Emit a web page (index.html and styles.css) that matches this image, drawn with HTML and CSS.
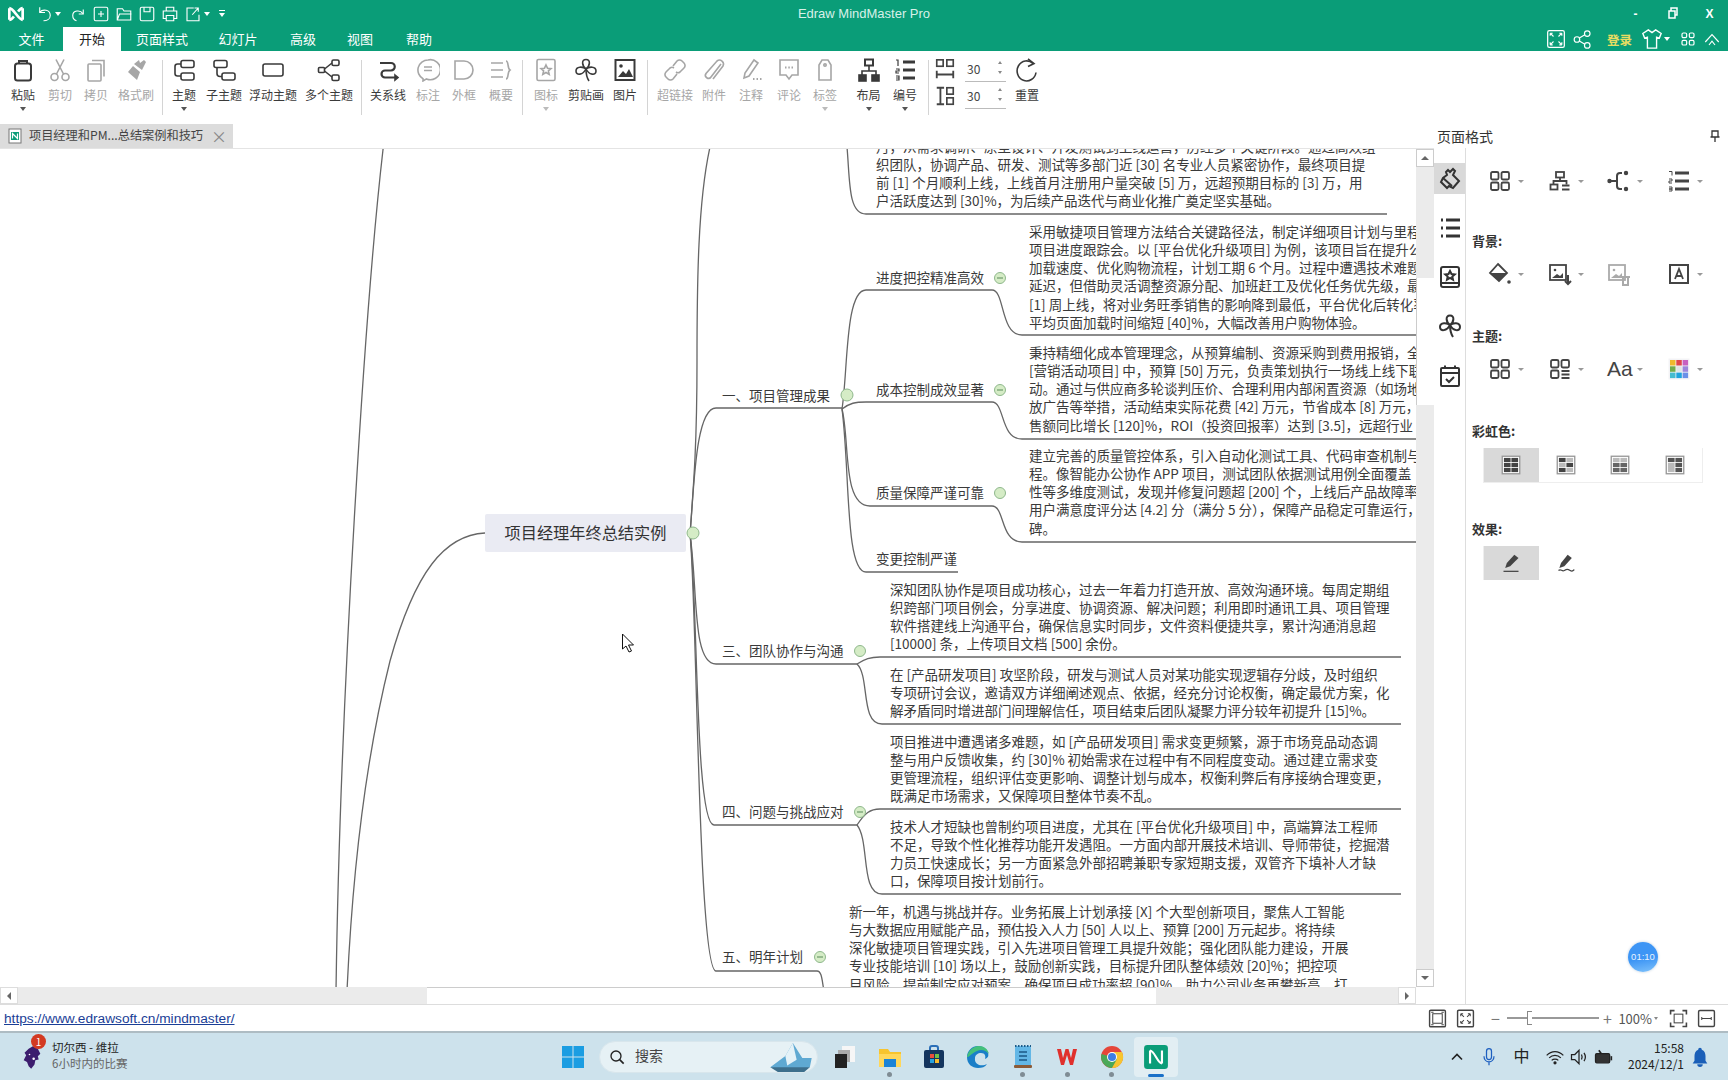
FILE: index.html
```html
<!DOCTYPE html>
<html lang="zh-CN">
<head>
<meta charset="utf-8">
<title>Edraw MindMaster Pro</title>
<link rel="stylesheet" href="styles.css">
</head>
<body>
<svg class="sprite" aria-hidden="true">
  <symbol id="clip" viewBox="0 0 24 24"><rect x="4" y="5.500" width="16" height="17" rx="2.500" stroke-width="2"/><path d="M8 5.500V3h8v2.500" stroke-width="2"/></symbol>
  <symbol id="cut" viewBox="0 0 24 24"><circle cx="6.500" cy="19" r="3.500"/><circle cx="17.500" cy="19" r="3.500"/><path d="M8.500 16 16 1.500M15.500 16 8 1.500"/></symbol>
  <symbol id="copy" viewBox="0 0 24 24"><rect x="4" y="6" width="13" height="17" rx="1"/><path d="M8 2.500h12v16"/></symbol>
  <symbol id="brush" viewBox="0 0 24 24"><path d="M15 2l1 3 4-3 2 2-4 8-8-6zM9 8l7 6-3 8-9-8z" fill="currentColor" stroke="none"/></symbol>
  <symbol id="topic" viewBox="0 0 24 24"><rect x="9" y="2.500" width="13" height="7" rx="2"/><rect x="9" y="15" width="13" height="7" rx="2"/><path d="M9 6H5.500a2.500 2.500 0 0 0-2.500 2.500v7a2.500 2.500 0 0 0 2.500 2.500H9"/></symbol>
  <symbol id="sub" viewBox="0 0 24 24"><rect x="2" y="2.500" width="13" height="7" rx="2"/><rect x="10" y="15" width="13" height="7" rx="2"/><path d="M5 9.500v6a3 3 0 0 0 3 3h2"/></symbol>
  <symbol id="float" viewBox="0 0 24 24"><rect x="2" y="6" width="20" height="12" rx="2"/></symbol>
  <symbol id="multi" viewBox="0 0 24 24"><rect x="1.500" y="9.500" width="6" height="5" rx="1"/><rect x="15" y="2" width="7" height="5.500" rx="1.500"/><rect x="15" y="17" width="7" height="5.500" rx="1.500"/><path d="M7.500 11 15 5M7.500 13 15 19"/></symbol>
  <symbol id="rel" viewBox="0 0 24 24"><path d="M4 5h11a3.500 3.500 0 0 1 0 7.500H9a3.500 3.500 0 0 0 0 7h10" stroke-width="2.200"/><path d="M19 17l3 2.500-3 2.500z" fill="currentColor"/></symbol>
  <symbol id="note" viewBox="0 0 24 24"><path d="M12 2a10 10 0 0 0-5 18.700V23l3.500-2.100A10 10 0 1 0 12 2z"/><path d="M8 9h8M8 12.500h8"/></symbol>
  <symbol id="bound" viewBox="0 0 24 24"><path d="M3 3h9a9 9 0 0 1 0 18H3z"/></symbol>
  <symbol id="sum" viewBox="0 0 24 24"><path d="M2 5h12M2 12h12M2 19h12M17 3c3 0 1 7 4 9-3 2-1 9-4 9"/></symbol>
  <symbol id="badge" viewBox="0 0 24 24"><rect x="3" y="1.500" width="18" height="21" rx="1.500"/><path d="M12 7l1.500 3.200 3.500.4-2.600 2.300.8 3.400-3.200-1.800-3.200 1.800.8-3.400L7 10.600l3.500-.4z"/></symbol>
  <symbol id="clover" viewBox="0 0 24 24"><path d="M12 11C8 8 7 1.500 12 1.500s4 6.500 0 9.500zM12 11c-3-2.500-10-3-10 2s7 4 10-2zM12 11c3-2.500 10-3 10 2s-7 4-10-2z"/><path d="M12 11c0 5 1 9 3 12" /></symbol>
  <symbol id="pic" viewBox="0 0 24 24"><rect x="2.500" y="2" width="19" height="20" stroke-width="2"/><circle cx="8" cy="8" r="1.800" fill="currentColor" stroke="none"/><path d="M5 19l5-6 3 3 3-5 4 8z" fill="currentColor" stroke="none"/></symbol>
  <symbol id="link" viewBox="0 0 24 24"><path d="M10 8l4-5a3.500 3.500 0 0 1 5 0l2 2a3.500 3.500 0 0 1 0 5l-4 4a3.500 3.500 0 0 1-4 0M14 16l-4 5a3.500 3.500 0 0 1-5 0l-2-2a3.500 3.500 0 0 1 0-5l4-4a3.500 3.500 0 0 1 4 0"/></symbol>
  <symbol id="paper" viewBox="0 0 24 24"><path d="M19 6 9 19a3 3 0 0 1-5-3.500L15 3a4 4 0 0 1 6 5L11 21"/></symbol>
  <symbol id="pen" viewBox="0 0 24 24"><path d="M15 2l4 3-9 13-5 2 1-5z"/><path d="M14 21h1.500M17.500 21H19M21 21h1.500" stroke-width="2"/></symbol>
  <symbol id="comment" viewBox="0 0 24 24"><path d="M3 2h18v15h-6l-3 4-3-4H3z"/><path d="M8 9.500h1.500M11.300 9.500h1.500M14.500 9.500H16" stroke-width="2"/></symbol>
  <symbol id="tag" viewBox="0 0 24 24"><path d="M9 2h6l3 5v15H6V7z"/><circle cx="12" cy="7" r="1.200"/></symbol>
  <symbol id="org" viewBox="0 0 24 24"><rect x="8" y="1.500" width="8" height="6" stroke-width="2"/><path d="M12 7.500V13M5 17v-4h14v4"/><rect x="2" y="17" width="7" height="6" fill="currentColor"/><rect x="15" y="17" width="7" height="6" fill="currentColor"/></symbol>
  <symbol id="nums" viewBox="0 0 24 24"><path d="M3 2h2v6M3 11h3v2H3v2h3M3 18h3v2H3M3 20h3v2H3" stroke-width="1.200"/><path d="M10 4h12M10 12h12M10 20h12" stroke-width="3"/></symbol>
  <symbol id="gaph" viewBox="0 0 24 24"><rect x="3" y="2" width="7" height="7"/><rect x="14" y="2" width="7" height="7"/><path d="M3 14v8M21 14v8M3 18h18" stroke-width="2"/></symbol>
  <symbol id="gapv" viewBox="0 0 24 24"><rect x="14" y="3" width="7" height="7"/><rect x="14" y="14" width="7" height="7"/><path d="M3 3h8M3 21h8M7 3v18" stroke-width="2"/></symbol>
  <symbol id="reset" viewBox="0 0 24 24"><path d="M18 5.500a9.500 10 0 1 0 3 9"/><path d="M13 1l6 4.500-6 3"/></symbol>
  <symbol id="nine" viewBox="0 0 24 24"><rect x="3" y="3" width="7.500" height="7.500" rx="1.500"/><rect x="13.500" y="3" width="7.500" height="7.500" rx="1.500"/><rect x="3" y="13.500" width="7.500" height="7.500" rx="1.500"/><rect x="13.500" y="13.500" width="7.500" height="7.500" rx="1.500"/></symbol>
  <symbol id="nine2" viewBox="0 0 24 24"><rect x="3" y="3" width="7.500" height="7.500" rx="1.500"/><rect x="13.500" y="3" width="7.500" height="7.500" rx="1.500"/><rect x="3" y="13.500" width="7.500" height="7.500" rx="1.500"/><path d="M13.500 14h8M13.500 17.500h8M13.500 21h8"/></symbol>
  <symbol id="pfill" viewBox="0 0 24 24"><path d="M10 3l2 2 3-3 2 2-2 4 6 6-6 7-4-2-2 2-6-6 2-4 4-3-1-3z" stroke-width="2"/><path d="M5 11l9 8" stroke-width="2"/></symbol>
  <symbol id="porg" viewBox="0 0 24 24"><rect x="8" y="3" width="8" height="5.500"/><path d="M12 8.500V12M5.500 15.500V12h13v3.500"/><rect x="2.500" y="15.500" width="7" height="5"/><path d="M14 16.500h7.500M14 20.500h7.500"/></symbol>
  <symbol id="pconn" viewBox="0 0 24 24"><circle cx="2.500" cy="12" r="1.300" fill="currentColor"/><path d="M4 12h5M15 4h-2a3 3 0 0 0-3 3v10a3 3 0 0 0 3 3h2" stroke-width="2"/><circle cx="19" cy="4" r="1.300" fill="currentColor"/><circle cx="19" cy="20" r="1.300" fill="currentColor"/></symbol>
  <symbol id="plist" viewBox="0 0 24 24"><path d="M2 2.500h3v4M2 10h3v2H2v2h3M2 18h3v2H2M2 20h3v2H2" stroke-width="1"/><path d="M8 4h14M8 12h14M8 20h14" stroke-width="3"/></symbol>
  <symbol id="ptab" viewBox="0 0 24 24"><path d="M3 4h2M3 12h2M3 20h2M8 4h14M8 12h14M8 20h14" stroke-width="3"/></symbol>
  <symbol id="pfill2" viewBox="0 0 24 24"><path d="M10 2l9 9-8 8-9-8z"/><path d="M2 11h17l-8 8z" fill="currentColor" stroke="none"/><circle cx="21" cy="20" r="1.800" fill="currentColor" stroke="none"/></symbol>
  <symbol id="pimg" viewBox="0 0 24 24"><rect x="2" y="3" width="16" height="15"/><circle cx="7" cy="8" r="1.300" fill="currentColor" stroke="none"/><path d="M4 16l5-4 3 2 3-3v5z" fill="currentColor" stroke="none"/><path d="M20 13v9M17 19l3 3 3-3" stroke-width="2"/></symbol>
  <symbol id="pdel" viewBox="0 0 24 24"><rect x="2" y="3" width="16" height="15"/><circle cx="7" cy="8" r="1.300" fill="currentColor" stroke="none"/><path d="M4 16l5-4 3 2 3-3v5z" fill="currentColor" stroke="none"/><path d="M14 15h9M16 15v8h5v-8" stroke-width="2"/></symbol>
  <symbol id="pa" viewBox="0 0 24 24"><rect x="3" y="3" width="18" height="18" stroke-width="2"/><path d="M8 17l4-10 4 10M9.500 14h5"/></symbol>
  <symbol id="pbook" viewBox="0 0 24 24"><rect x="3" y="2" width="18" height="20" rx="2" stroke-width="2"/><path d="M3 18h18" stroke-width="2"/><path d="M12 6l1.500 3 3.200.4-2.400 2.100.7 3.200-3-1.700-3 1.700.7-3.200-2.400-2.100 3.200-.4z"/></symbol>
  <symbol id="pcal" viewBox="0 0 24 24"><rect x="3" y="4" width="18" height="18" rx="1" stroke-width="2"/><path d="M3 9h18M7 1.500V5M17 1.500V5" stroke-width="2"/><path d="M8 15l3 3 5-5" stroke-width="2"/></symbol>
  <symbol id="g1" viewBox="0 0 24 24"><rect x="1.500" y="1.500" width="21" height="21" fill="#fff" stroke="#999"/><g fill="#444" stroke="none"><rect x="3.500" y="3.500" width="8" height="5"/><rect x="12.500" y="3.500" width="8" height="5"/><rect x="3.500" y="9.500" width="8" height="5"/><rect x="12.500" y="9.500" width="8" height="5"/><rect x="3.500" y="15.500" width="8" height="5"/><rect x="12.500" y="15.500" width="8" height="5"/></g></symbol>
  <symbol id="g2" viewBox="0 0 24 24"><rect x="1.500" y="1.500" width="21" height="21" fill="#fff" stroke="#999"/><g stroke="none"><rect x="3.500" y="3.500" width="8" height="5" fill="#444"/><rect x="12.500" y="3.500" width="8" height="5" fill="#bbb"/><rect x="3.500" y="9.500" width="8" height="5" fill="#bbb"/><rect x="12.500" y="9.500" width="8" height="5" fill="#444"/><rect x="3.500" y="15.500" width="8" height="5" fill="#444"/><rect x="12.500" y="15.500" width="8" height="5" fill="#bbb"/></g></symbol>
  <symbol id="g3" viewBox="0 0 24 24"><rect x="1.500" y="1.500" width="21" height="21" fill="#fff" stroke="#999"/><g stroke="none"><rect x="3.500" y="3.500" width="8" height="5" fill="#bbb"/><rect x="12.500" y="3.500" width="8" height="5" fill="#bbb"/><rect x="3.500" y="9.500" width="8" height="5" fill="#666"/><rect x="12.500" y="9.500" width="8" height="5" fill="#666"/><rect x="3.500" y="15.500" width="8" height="5" fill="#666"/><rect x="12.500" y="15.500" width="8" height="5" fill="#666"/></g></symbol>
  <symbol id="g4" viewBox="0 0 24 24"><rect x="1.500" y="1.500" width="21" height="21" fill="#fff" stroke="#999"/><g stroke="none"><rect x="3.500" y="3.500" width="8" height="5" fill="#555"/><rect x="12.500" y="3.500" width="8" height="5" fill="#555"/><rect x="3.500" y="9.500" width="8" height="11" fill="#bbb"/><rect x="12.500" y="9.500" width="8" height="5" fill="#555"/><rect x="12.500" y="15.500" width="8" height="5" fill="#555"/></g></symbol>
  <symbol id="fx1" viewBox="0 0 24 24"><path d="M16 2l5 4-10 10-6 2 2-6z" fill="currentColor" stroke="none"/><path d="M3 22h18" stroke-width="1.500"/></symbol>
  <symbol id="fx2" viewBox="0 0 24 24"><path d="M14 2l5 4-9 10-6 2 2-6z" fill="currentColor" stroke="none"/><path d="M3 21c3-3 4 2 7 0s4-2 7 0 3 0 5-1" stroke-width="1.500"/></symbol>
  <symbol id="logo" viewBox="0 0 24 24"><path d="M4 5v14M20 5v14M4 5c5 0 11 14 16 14M20 5c-2 0-4 2-5.500 4M4 19c2 0 4-2 5.500-4" fill="none"/></symbol>
</svg>

<header class="titlebar">
  <div class="qa">
    <svg class="i logo"><use href="#logo"/></svg>
    <svg class="i q ml10" viewBox="0 0 24 24"><path d="M5 3v7h7"/><path d="M5 9.500C9 5 19 6 19 14c0 5-5 7-9 7"/></svg>
    <span class="caret-w"></span>
    <svg class="i q ml8" viewBox="0 0 24 24"><path d="M19 6v6h-6"/><path d="M18.500 11.500C15 6 5 7 5 14c0 4 2 6 5 7"/></svg>
    <svg class="i q ml5" viewBox="0 0 24 24"><rect x="3" y="3" width="18" height="18" rx="2"/><path d="M12 8v8M8 12h8"/></svg>
    <svg class="i q ml5" viewBox="0 0 24 24"><path d="M3 20V5h7l2 3h9v12zM3 20l3-8h16"/></svg>
    <svg class="i q ml5" viewBox="0 0 24 24"><rect x="3" y="3" width="18" height="18" rx="2"/><path d="M8 3v6h8V3"/></svg>
    <svg class="i q ml5" viewBox="0 0 24 24"><path d="M7 8V3h10v5M7 18H3V8h18v10h-4M7 14h10v7H7z"/></svg>
    <svg class="i q ml5" viewBox="0 0 24 24"><path d="M20 13v8H4V4h9M11 13l8-9M14 4h5v5"/></svg>
    <span class="caret-w ml2"></span>
    <span class="custom"></span>
  </div>
  <div class="apptitle">Edraw MindMaster Pro</div>
  <div class="winctl">
    <span class="wbtn">-</span>
    <svg class="wbtn wsvg" viewBox="0 0 37 14"><path d="M15 5h6v7h-6zM17 5V2h6v7h-2" fill="none" stroke="#fff" stroke-width="1.500"/></svg>
    <span class="wbtn wx">X</span>
  </div>
</header>

<nav class="tabs">
  <a class="tab w63">文件</a>
  <a class="tab tab-on w58">开始</a>
  <a class="tab w82">页面样式</a>
  <a class="tab w70">幻灯片</a>
  <a class="tab w60">高级</a>
  <a class="tab w54">视图</a>
  <a class="tab w64">帮助</a>
  <div class="tabright">
    <svg class="i full" viewBox="0 0 24 24"><rect x="2" y="2" width="20" height="20" rx="2"/><path d="M5 5l4 4M5 5h3M5 5v3M19 5l-4 4M19 5h-3M19 5v3M5 19l4-4M5 19h3M5 19v-3M19 19l-4-4M19 19h-3M19 19v-3" stroke-width="1.300"/></svg>
    <svg class="i share" viewBox="0 0 24 24"><circle cx="5" cy="12" r="3.500"/><circle cx="18" cy="4.500" r="3.500"/><circle cx="18" cy="19.500" r="3.500"/><path d="M8 10l7-4M8 14l7 4"/></svg>
    <span class="login">登录</span>
    <svg class="i shirt" viewBox="0 0 24 24"><path d="M8 2l4 3 4-3 6 4-2 5-3-1v12H7V10l-3 1-2-5z"/></svg>
    <span class="caret-w ml1"></span>
    <svg class="i apps" viewBox="0 0 24 24"><rect x="3" y="3" width="7" height="7" rx="2"/><rect x="14" y="3" width="7" height="7" rx="2"/><rect x="3" y="14" width="7" height="7" rx="2"/><rect x="14" y="14" width="7" height="7" rx="2"/></svg>
    <svg class="i coll" viewBox="0 0 24 24"><path d="M3 16l9-10 9 10M8 20l4-5 4 5"/></svg>
  </div>
</nav>

<section class="ribbon">
  <div class="b w38"><svg class="i"><use href="#clip"/></svg><span>粘贴</span><i class="caret"></i></div>
  <div class="b w36 off"><svg class="i"><use href="#cut"/></svg><span>剪切</span></div>
  <div class="b w36 off"><svg class="i"><use href="#copy"/></svg><span>拷贝</span></div>
  <div class="b w44 off"><svg class="i"><use href="#brush"/></svg><span>格式刷</span></div>
  <div class="sep ml4"></div>
  <div class="b w36"><svg class="i"><use href="#topic"/></svg><span>主题</span><i class="caret"></i></div>
  <div class="b w44"><svg class="i"><use href="#sub"/></svg><span>子主题</span></div>
  <div class="b w54"><svg class="i"><use href="#float"/></svg><span>浮动主题</span></div>
  <div class="b w58"><svg class="i"><use href="#multi"/></svg><span>多个主题</span></div>
  <div class="sep"></div>
  <div class="b w46"><svg class="i"><use href="#rel"/></svg><span>关系线</span></div>
  <div class="b w34 off"><svg class="i"><use href="#note"/></svg><span>标注</span></div>
  <div class="b w38 off"><svg class="i"><use href="#bound"/></svg><span>外框</span></div>
  <div class="b w36 off"><svg class="i"><use href="#sum"/></svg><span>概要</span></div>
  <div class="sep"></div>
  <div class="b w40 off"><svg class="i"><use href="#badge"/></svg><span>图标</span><i class="caret"></i></div>
  <div class="b w40"><svg class="i"><use href="#clover"/></svg><span>剪贴画</span></div>
  <div class="b w38"><svg class="i"><use href="#pic"/></svg><span>图片</span></div>
  <div class="sep"></div>
  <div class="b w48 off"><svg class="i"><use href="#link"/></svg><span>超链接</span></div>
  <div class="b w30 off"><svg class="i"><use href="#paper"/></svg><span>附件</span></div>
  <div class="b w44 off"><svg class="i"><use href="#pen"/></svg><span>注释</span></div>
  <div class="b w32 off"><svg class="i"><use href="#comment"/></svg><span>评论</span></div>
  <div class="b w40 off"><svg class="i"><use href="#tag"/></svg><span>标签</span><i class="caret"></i></div>
  <div class="b w47"><svg class="i"><use href="#org"/></svg><span>布局</span><i class="caret"></i></div>
  <div class="b w26"><svg class="i"><use href="#nums"/></svg><span>编号</span><i class="caret"></i></div>
  <div class="sep ml10"></div>
  <div class="spins">
    <div class="spin"><svg class="i"><use href="#gaph"/></svg><div class="field">30<span class="ud"><i></i><i></i></span></div></div>
    <div class="spin"><svg class="i"><use href="#gapv"/></svg><div class="field">30<span class="ud"><i></i><i></i></span></div></div>
  </div>
  <div class="b w34 ml4"><svg class="i"><use href="#reset"/></svg><span>重置</span></div>
</section>

<main class="work">
  <div class="docside">
    <div class="docbar">
      <div class="doctab">
        <svg class="docicon" viewBox="0 0 16 16"><rect x="2" y="1" width="12" height="14" fill="#fff" stroke="#777"/><rect x="4" y="4" width="8" height="8" fill="#0a9d78"/><path d="M5.500 10.500v-5l5 5v-5" fill="none" stroke="#fff" stroke-width="1.200"/></svg>
        <span>项目经理和PM...总结案例和技巧</span>
        <b class="docx">×</b>
      </div>
    </div>
    <div class="docmain">
      <div class="canvas">
        <svg class="wires" viewBox="0 148 1416 839">
          <path d="M384 140C365 300 340 700 336 990"/>
          <path d="M485 532C445 534 415 570 390 660C365 760 352 880 347 990"/>
          <path d="M690 533C694 480 697 440 697 360C697 280 698 200 710 146"/>
          <path d="M690 533C694 490 695 407 716 407H842"/>
          <path d="M690 533C698 590 692 663 716 663H857"/>
          <path d="M690 533C698 600 695 824 714 824H857"/>
          <path d="M690 533C697 600 698 970 716 970H817C822 970 822 980 824 990"/>
          <path d="M847 146C850 180 848 213 866 213H1387"/>
          <path d="M842 408C848 370 845 289 866 289H992C1005 289 1000 334 1022 334H1416"/>
          <path d="M842 408C850 402 855 401 866 401H992C1005 401 1000 438 1022 438H1416"/>
          <path d="M842 408C850 440 842 505 870 505H992C1005 505 1000 541 1022 541H1416"/>
          <path d="M842 408C850 470 845 571 866 571H958"/>
          <path d="M857 663C865 658 870 656 880 656H1401"/>
          <path d="M857 663C870 675 860 723 882 723H1401"/>
          <path d="M857 824C865 812 870 808 880 808H1401"/>
          <path d="M857 824C870 840 860 893 882 893H1401"/>
          <g class="dot"><circle cx="693" cy="532" r="6"/><circle cx="847" cy="394" r="6"/><circle cx="1000" cy="277" r="5.500"/><circle cx="1000" cy="389" r="5.500"/><circle cx="1000" cy="492" r="5.500"/><circle cx="860" cy="650" r="5.500"/><circle cx="860" cy="811" r="5.500"/><circle cx="820" cy="956" r="5.500"/></g>
          <path class="minus" d="M997 277h6M997 389h6M857 811h6M817 956h6"/>
          <path class="cursor" d="M622.500 633v15l3.500-3 3 6 2.500-1-3-6h5z"/>
        </svg>

        <div class="root">项目经理年终总结实例</div>

        <div class="lb l1">一、项目管理成果</div>
        <div class="lb l2">进度把控精准高效</div>
        <div class="lb l3">成本控制成效显著</div>
        <div class="lb l4">质量保障严谨可靠</div>
        <div class="lb l5">变更控制严谨</div>
        <div class="lb l6">三、团队协作与沟通</div>
        <div class="lb l7">四、问题与挑战应对</div>
        <div class="lb l8">五、明年计划</div>

        <div class="tx ta">月，从需求调研、原型设计、开发测试到上线运营，历经多个关键阶段。通过高效组<br>织团队，协调产品、研发、测试等多部门近 [30] 名专业人员紧密协作，最终项目提<br>前 [1] 个月顺利上线，上线首月注册用户量突破 [5] 万，远超预期目标的 [3] 万，用<br>户活跃度达到 [30]%，为后续产品迭代与商业化推广奠定坚实基础。</div>
        <div class="tx tb">采用敏捷项目管理方法结合关键路径法，制定详细项目计划与里程碑，<br>项目进度跟踪会。以 [平台优化升级项目] 为例，该项目旨在提升公司<br>加载速度、优化购物流程，计划工期 6 个月。过程中遭遇技术难题<br>延迟，但借助灵活调整资源分配、加班赶工及优化任务优先级，最<br>[1] 周上线，将对业务旺季销售的影响降到最低，平台优化后转化率<br>平均页面加载时间缩短 [40]%，大幅改善用户购物体验。</div>
        <div class="tx tc">秉持精细化成本管理理念，从预算编制、资源采购到费用报销，全<br>[营销活动项目] 中，预算 [50] 万元，负责策划执行一场线上线下联<br>动。通过与供应商多轮谈判压价、合理利用内部闲置资源（如场地<br>放广告等举措，活动结束实际花费 [42] 万元，节省成本 [8] 万元，<br>售额同比增长 [120]%，ROI（投资回报率）达到 [3.5]，远超行业</div>
        <div class="tx td">建立完善的质量管控体系，引入自动化测试工具、代码审查机制与<br>程。像智能办公协作 APP 项目，测试团队依据测试用例全面覆盖<br>性等多维度测试，发现并修复问题超 [200] 个，上线后产品故障率<br>用户满意度评分达 [4.2] 分（满分 5 分），保障产品稳定可靠运行，<br>碑。</div>
        <div class="tx te">深知团队协作是项目成功核心，过去一年着力打造开放、高效沟通环境。每周定期组<br>织跨部门项目例会，分享进度、协调资源、解决问题；利用即时通讯工具、项目管理<br>软件搭建线上沟通平台，确保信息实时同步，文件资料便捷共享，累计沟通消息超<br>[10000] 条，上传项目文档 [500] 余份。</div>
        <div class="tx tf">在 [产品研发项目] 攻坚阶段，研发与测试人员对某功能实现逻辑存分歧，及时组织<br>专项研讨会议，邀请双方详细阐述观点、依据，经充分讨论权衡，确定最优方案，化<br>解矛盾同时增进部门间理解信任，项目结束后团队凝聚力评分较年初提升 [15]%。</div>
        <div class="tx tg">项目推进中遭遇诸多难题，如 [产品研发项目] 需求变更频繁，源于市场竞品动态调<br>整与用户反馈收集，约 [30]% 初始需求在过程中有不同程度变动。通过建立需求变<br>更管理流程，组织评估变更影响、调整计划与成本，权衡利弊后有序接纳合理变更，<br>既满足市场需求，又保障项目整体节奏不乱。</div>
        <div class="tx th">技术人才短缺也曾制约项目进度，尤其在 [平台优化升级项目] 中，高端算法工程师<br>不足，导致个性化推荐功能开发遇阻。一方面内部开展技术培训、导师带徒，挖掘潜<br>力员工快速成长；另一方面紧急外部招聘兼职专家短期支援，双管齐下填补人才缺<br>口，保障项目按计划前行。</div>
        <div class="tx ti">新一年，机遇与挑战并存。业务拓展上计划承接 [X] 个大型创新项目，聚焦人工智能<br>与大数据应用赋能产品，预估投入人力 [50] 人以上、预算 [200] 万元起步。将持续<br>深化敏捷项目管理实践，引入先进项目管理工具提升效能；强化团队能力建设，开展<br>专业技能培训 [10] 场以上，鼓励创新实践，目标提升团队整体绩效 [20]%；把控项<br>目风险，提前制定应对预案，确保项目成功率超 [90]%，助力公司业务再攀新高，打</div>
      </div>
      <div class="vscroll">
        <div class="sbtn"><i class="tri-up"></i></div>
        <div class="vtrack vt1"></div>
        <div class="vthumb"></div>
        <div class="vtrack vt2"></div>
        <div class="sbtn"><i class="tri-down"></i></div>
      </div>
    </div>
    <div class="hscroll">
      <div class="hbtn"><i class="tri-left"></i></div>
      <div class="htrack ht1"></div>
      <div class="hthumb"></div>
      <div class="htrack ht2"></div>
      <div class="hbtn"><i class="tri-right"></i></div>
    </div>
  </div>

  <aside class="panel">
    <div class="panelhead"><span>页面格式</span><svg class="pin" viewBox="0 0 12 12"><path d="M3 1h6v6H3zM1.500 7h9M6 7v5" fill="none" stroke="#333" stroke-width="1.300"/></svg></div>
    <div class="panelbody">
      <div class="rail">
        <div class="rb rb-on"><svg class="i"><use href="#pfill"/></svg></div>
        <div class="rb"><svg class="i"><use href="#ptab"/></svg></div>
        <div class="rb"><svg class="i"><use href="#pbook"/></svg></div>
        <div class="rb"><svg class="i"><use href="#clover"/></svg></div>
        <div class="rb"><svg class="i"><use href="#pcal"/></svg></div>
      </div>
      <div class="pcontent">
        <div class="prow first">
          <div class="pc"><svg class="i"><use href="#nine"/></svg><i class="pcaret"></i></div>
          <div class="pc"><svg class="i"><use href="#porg"/></svg><i class="pcaret"></i></div>
          <div class="pc"><svg class="i"><use href="#pconn"/></svg><i class="pcaret"></i></div>
          <div class="pc"><svg class="i"><use href="#plist"/></svg><i class="pcaret"></i></div>
        </div>
        <div class="plabel mt36">背景:</div>
        <div class="prow">
          <div class="pc"><svg class="i"><use href="#pfill2"/></svg><i class="pcaret"></i></div>
          <div class="pc"><svg class="i"><use href="#pimg"/></svg><i class="pcaret"></i></div>
          <div class="pc pc-off"><svg class="i"><use href="#pdel"/></svg></div>
          <div class="pc"><svg class="i"><use href="#pa"/></svg><i class="pcaret"></i></div>
        </div>
        <div class="plabel">主题:</div>
        <div class="prow">
          <div class="pc"><svg class="i"><use href="#nine"/></svg><i class="pcaret"></i></div>
          <div class="pc"><svg class="i"><use href="#nine2"/></svg><i class="pcaret"></i></div>
          <div class="pc"><span class="aa">Aa</span><i class="pcaret"></i></div>
          <div class="pc">
            <svg class="i" viewBox="0 0 24 24"><rect x="1.500" y="1.500" width="21" height="21" fill="#f3f3f6" stroke="none"/><g stroke="none"><rect x="3" y="3" width="5.500" height="5.500" fill="#f0b92d"/><rect x="9.300" y="3" width="5.500" height="5.500" fill="#e0474c"/><rect x="15.600" y="3" width="5.500" height="5.500" fill="#c860c0"/><rect x="3" y="9.300" width="5.500" height="5.500" fill="#72ad4c"/><rect x="9.300" y="9.300" width="5.500" height="5.500" fill="#dfe5e5"/><rect x="15.600" y="9.300" width="5.500" height="5.500" fill="#9b85dc"/><rect x="3" y="15.600" width="5.500" height="5.500" fill="#45bcd0"/><rect x="9.300" y="15.600" width="5.500" height="5.500" fill="#1fa4dd"/><rect x="15.600" y="15.600" width="5.500" height="5.500" fill="#6a8fe8"/></g></svg>
            <i class="pcaret"></i>
          </div>
        </div>
        <div class="plabel">彩虹色:</div>
        <div class="pgroup rainbow">
          <div class="gc gc-on"><svg class="i"><use href="#g1"/></svg></div>
          <div class="gc"><svg class="i"><use href="#g2"/></svg></div>
          <div class="gc"><svg class="i"><use href="#g3"/></svg></div>
          <div class="gc"><svg class="i"><use href="#g4"/></svg></div>
        </div>
        <div class="plabel mt38">效果:</div>
        <div class="pgroup effect">
          <div class="gc gc-on"><svg class="i"><use href="#fx1"/></svg></div>
          <div class="gc"><svg class="i"><use href="#fx2"/></svg></div>
        </div>
        <div class="timer">01:10</div>
      </div>
    </div>
  </aside>
</main>

<footer class="status">
  <a class="url">https://www.edrawsoft.cn/mindmaster/</a>
  <div class="sright">
    <svg class="i st" viewBox="0 0 24 24"><rect x="2" y="1.500" width="20" height="21" rx="1.500" stroke-width="1.800"/><rect x="6" y="6" width="12" height="12"/><path d="M4 4h3M17 4h3M4 20h3M17 20h3"/></svg>
    <svg class="i st ml9" viewBox="0 0 24 24"><rect x="2" y="1.500" width="20" height="21" rx="1.500" stroke-width="1.800"/><path d="M6 6l4 4M6 6h3M6 6v3M18 6l-4 4M18 6h-3M18 6v3M6 18l4-4M6 18h3M6 18v-3M18 18l-4-4M18 18h-3M18 18v-3"/></svg>
    <span class="zm ml14">−</span>
    <div class="slider"><i class="knob"></i></div>
    <span class="zm zp">+</span>
    <span class="pct">100%</span><i class="scaret"></i>
    <svg class="i st ml11" viewBox="0 0 24 24"><path d="M2 7V2h5M17 2h5v5M2 17v5h5M22 17v5h-5" stroke-width="2"/><rect x="6.500" y="6.500" width="11" height="11"/></svg>
    <svg class="i st ml9" viewBox="0 0 24 24"><rect x="2" y="2" width="20" height="20" rx="1.500" stroke-width="1.800"/><path d="M6 12h12M6 10v4M18 10v4"/></svg>
  </div>
</footer>

<footer class="taskbar">
  <div class="weather">
    <svg class="wicon" viewBox="0 0 24 30"><path d="M13 2l6 3 3 6-3 3 1 4-4 1-1 5-4 5-3-3-2-5-4-2 3-6-2-3 5-5z" fill="#3c1d6e"/><circle cx="14" cy="17" r="1.500" fill="#fff"/><circle cx="9" cy="12" r="1" fill="#fff"/></svg>
    <span class="wbadge">1</span>
    <div class="wtext"><div>切尔西 - 维拉</div><div class="wsub">6小时内的比赛</div></div>
  </div>
  <svg class="win" viewBox="0 0 24 24"><path d="M1 1h10.500v10.500H1zM12.500 1H23v10.500H12.500zM1 12.500h10.500V23H1zM12.500 12.500H23V23H12.500z" fill="#1b9de2"/></svg>
  <div class="search">
    <svg class="sq" viewBox="0 0 24 24"><circle cx="10.500" cy="10.500" r="7.500"/><path d="M16 16l6 6" stroke-width="2.500"/></svg>
    <span class="stext">搜索</span>
    <svg class="berg" viewBox="0 0 48 34"><path d="M2 28 18 16 26 2 36 18 46 18 44 28 24 33z" fill="#5fa9d2"/><path d="M26 2 30 20 20 26 18 16z" fill="#e4f2f8"/><path d="M2 28h42l-6 5H10z" fill="#3d6f8c"/></svg>
  </div>
  <div class="apps-row">
    <div class="ta-c"><svg class="ta" viewBox="0 0 24 24"><rect x="9" y="1" width="13" height="16" fill="#f6f6f6"/><rect x="5" y="5" width="12" height="12" fill="#aaa"/><rect x="2" y="9" width="12" height="14" fill="#222"/></svg></div>
    <div class="ta-c ta-dot"><svg class="ta" viewBox="0 0 24 24"><path d="M1 4h9l2 3h11v15H1z" fill="#f7c42e"/><path d="M1 9h22v13H1z" fill="#ffd75a"/><rect x="6" y="14" width="12" height="8" fill="#1b83d6"/></svg></div>
    <div class="ta-c"><svg class="ta" viewBox="0 0 24 24"><path d="M8 6V3a2 2 0 0 1 2-2h4a2 2 0 0 1 2 2v3" fill="none" stroke="#2a6fb8" stroke-width="2"/><rect x="2" y="5" width="20" height="18" rx="2" fill="#14355e"/><rect x="8" y="9" width="4" height="4" fill="#e84e3b"/><rect x="13" y="9" width="4" height="4" fill="#6fbe46"/><rect x="8" y="14" width="4" height="4" fill="#27a3e0"/><rect x="13" y="14" width="4" height="4" fill="#f8bb2d"/></svg></div>
    <div class="ta-c"><svg class="ta" viewBox="0 0 24 24"><path d="M12 1a11 11 0 0 0-11 11c0 7 5 11 11 11 4 0 7-1 9-4-5 3-13 1-12-6 0-3 3-5 6-5 4 0 5 3 4 6 3-1 4-3 3-6-1-4-5-7-10-7z" fill="#1a7fc8"/><path d="M1 12c1-6 6-11 12-11 5 0 9 3 10 8-3-4-8-5-12-3-5 2-9 7-10 6z" fill="#44c07b"/></svg></div>
    <div class="ta-c ta-dot"><svg class="ta" viewBox="0 0 24 24"><rect x="4" y="1" width="16" height="20" rx="1.500" fill="#63b7e6"/><path d="M8 7h8M8 11h8M8 15h8" stroke="#1c5a87" stroke-width="1.500"/><path d="M4 1h16" stroke="#1c5a87" stroke-width="2" stroke-dasharray="1.500 1.500"/><rect x="3" y="20" width="18" height="3" rx="1" fill="#8c5b37"/></svg></div>
    <div class="ta-c ta-dot"><svg class="ta" viewBox="0 0 24 24"><path d="M2 4l4 16h3l3-10 3 10h3l4-16h-4l-2 9-2.500-9h-3L8 13 6 4z" fill="#e0302c"/></svg></div>
    <div class="ta-c ta-dot"><svg class="ta" viewBox="0 0 24 24"><circle cx="12" cy="12" r="11" fill="#e5463a"/><path d="M12 12 1.500 9A11 11 0 0 0 12 23l6-9z" fill="#4aa858"/><path d="M12 7h10a11 11 0 0 1-10 16l5-9z" fill="#f7c52f"/><circle cx="12" cy="12" r="5" fill="#fff"/><circle cx="12" cy="12" r="4" fill="#3e7ee4"/></svg></div>
    <div class="ta-c ta-cur"><svg class="ta tam" viewBox="0 0 24 24"><rect x="1" y="1" width="22" height="22" rx="3" fill="#0a9d78"/><path d="M6.500 6v12M17.500 6v12M6.500 6c4 0 7 12 11 12" fill="none" stroke="#fff" stroke-width="2"/></svg></div>
  </div>
  <div class="tray">
    <svg class="tr" viewBox="0 0 24 24"><path d="M6 15l6-6 6 6" stroke-width="2"/></svg>
    <svg class="tr blue" viewBox="0 0 24 24"><rect x="9" y="2" width="6" height="13" rx="3"/><path d="M6 11c0 9 12 9 12 0M12 18v4"/></svg>
    <span class="zh">中</span>
    <svg class="tr tr24" viewBox="0 0 24 24"><path d="M2 10c6-6 14-6 20 0M5 13c4-4 10-4 14 0M8 16c2-2 6-2 8 0"/><circle cx="12" cy="19" r="1.200" fill="currentColor"/></svg>
    <svg class="tr tr24" viewBox="0 0 24 24"><path d="M3 9h4l5-5v16l-5-5H3zM15 9c1 2 1 4 0 6M18 7c2 3 2 7 0 10"/></svg>
    <svg class="tr tr24" viewBox="0 0 24 24"><rect x="3" y="8" width="17" height="11" rx="1.500" fill="#333"/><path d="M22 11v5" stroke-width="2"/><path d="M7 4l3 4" stroke-width="2"/></svg>
    <div class="clock"><div>15:58</div><div>2024/12/1</div></div>
    <svg class="bell" viewBox="0 0 24 24"><path d="M12 2a2 2 0 0 1 2 2c3 1 4 4 4 7v5l2 3H4l2-3v-5c0-3 1-6 4-7a2 2 0 0 1 2-2z" fill="#1a5fb8"/><path d="M9 20h6a3 3 0 0 1-6 0z" fill="#1a5fb8"/></svg>
  </div>
</footer>
</body>
</html>
```

FILE: styles.css
```css
* { box-sizing: border-box; }
html, body { margin: 0; padding: 0; }
body {
  width: 1728px; height: 1080px; overflow: hidden;
  font-family: "Noto Sans CJK SC", "Noto Sans", sans-serif;
  color: #333; background: #fff;
  display: flex; flex-direction: column;
}
.sprite { display: none; }
.i { width: 24px; height: 24px; fill: none; stroke: currentColor; stroke-width: 1.6; flex: none; display: block; }

.ml1 { margin-left: 1px; } .ml2 { margin-left: 2px; } .ml4 { margin-left: 4px; }
.ml5 { margin-left: 5px; } .ml8 { margin-left: 8px; } .ml9 { margin-left: 9px; }
.ml10 { margin-left: 10px; } .ml11 { margin-left: 11px; } .ml14 { margin-left: 14px; }

/* title bar */
.titlebar { height: 27px; background: #0a9d78; color: #fff; display: flex; align-items: center; flex: none; }
.qa { flex: 1; display: flex; align-items: center; padding-left: 6px; }
.logo { width: 20px; height: 20px; stroke-width: 3.200; }
.q { width: 18px; height: 18px; stroke-width: 1.500; }
.caret-w { width: 0; height: 0; border: 3px solid transparent; border-top: 4px solid #fff; border-bottom: 0; margin-left: 1px; flex: none; }
.caret-w.ml2 { margin-left: 2px; }
.custom { width: 6px; height: 7px; margin-left: 9px; border-top: 1px solid #fff; position: relative; }
.custom::after { content: ""; position: absolute; left: 0; top: 2px; border: 3px solid transparent; border-top: 4px solid #fff; border-bottom: 0; }
.apptitle { font-size: 13px; color: #d8f0e8; font-family: "Liberation Sans", sans-serif; margin-right: 6px; }
.winctl { flex: 1; display: flex; justify-content: flex-end; }
.wbtn { width: 37px; height: 27px; display: flex; align-items: center; justify-content: center; font-size: 12px; font-weight: 700; color: #fff; font-family: "Liberation Sans", sans-serif; }
.wsvg { height: 14px; margin-top: 6px; }

/* tabs */
.tabs { height: 24px; background: #0a9d78; display: flex; flex: none; }
.tab { color: #fff; font-size: 13px; line-height: 23px; text-align: center; flex: none; }
.tab-on { background: #fff; color: #222; }
.w26 { width: 26px; } .w30 { width: 30px; } .w32 { width: 32px; } .w34 { width: 34px; } .w36 { width: 36px; }
.w38 { width: 38px; } .w40 { width: 40px; } .w44 { width: 44px; } .w46 { width: 46px; } .w47 { width: 47px; }
.w48 { width: 48px; } .w54 { width: 54px; } .w58 { width: 58px; } .w60 { width: 60px; } .w63 { width: 63px; }
.w64 { width: 64px; } .w70 { width: 70px; } .w82 { width: 82px; }
.tabright { margin-left: auto; padding-right: 7px; display: flex; align-items: center; color: #fff; }
.full { width: 20px; height: 20px; stroke-width: 1.500; }
.share { width: 19px; height: 19px; margin-left: 7px; stroke-width: 1.500; }
.login { width: 26px; margin-left: 15px; font-size: 12.500px; font-weight: 700; color: #e8dc62; white-space: nowrap; }
.shirt { width: 22px; height: 22px; margin-left: 8px; stroke-width: 1.500; }
.apps { width: 16px; height: 16px; margin-left: 10px; stroke-width: 1.800; }
.coll { width: 18px; height: 18px; margin-left: 7px; stroke-width: 1.500; }

/* ribbon */
.ribbon { height: 73px; flex: none; padding: 7px 0 0 4px; display: flex; background: #fff; }
.b { display: flex; flex-direction: column; align-items: center; flex: none; color: #3a3a3a; }
.b span { font-size: 12px; line-height: 16px; margin-top: 5px; white-space: nowrap; }
.b .caret { margin-top: 4px; width: 0; height: 0; border: 3px solid transparent; border-top: 4px solid #555; border-bottom: 0; }
.off { color: #a6a6a6; }
.off .caret { border-top-color: #bbb; }
.sep { width: 1px; height: 55px; margin: 2px 3px 0; background: #d4d4d4; flex: none; }
.sep.ml4 { margin-left: 4px; }
.sep.ml10 { margin-left: 10px; }
.spins { margin: -3px 0 0 2px; flex: none; }
.spin { height: 27px; display: flex; align-items: center; }
.spin .i { width: 22px; height: 22px; stroke-width: 1.800; color: #444; }
.field { width: 41px; height: 27px; margin-left: 9px; border-bottom: 1px solid #bbb; font-size: 12px; line-height: 27px; padding-left: 2px; position: relative; color: #444; }
.ud { position: absolute; right: 4px; top: 6px; display: flex; flex-direction: column; gap: 7px; }
.ud i { width: 0; height: 0; border: 2.500px solid transparent; }
.ud i:first-child { border-bottom: 3px solid #888; border-top: 0; }
.ud i:last-child { border-top: 3px solid #888; border-bottom: 0; }

/* workspace */
.work { flex: 1; display: flex; min-height: 0; }
.docside { width: 1434px; display: flex; flex-direction: column; flex: none; }
.docbar { height: 24px; flex: none; display: flex; }
.doctab { width: 233px; background: #dcdcdc; display: flex; align-items: center; padding-left: 7px; font-size: 12.200px; color: #444; }
.docicon { width: 16px; height: 16px; margin-right: 6px; flex: none; }
.doctab span { white-space: nowrap; line-height: 20px; margin-top: -2px; }
.docx { margin-left: 8px; font-size: 16px; font-weight: 400; color: #888; }
.docmain { flex: 1; display: flex; min-height: 0; border-top: 1px solid #e4e4e4; }
.canvas { width: 1416px; position: relative; overflow: hidden; background: #fff; flex: none; }
.wires { position: absolute; left: 0; top: 0; width: 1416px; height: 839px; fill: none; stroke: #666; stroke-width: 1.300; }
.dot circle { fill: #d5ecc6; stroke: #8fb88c; stroke-width: 1; }
.minus { stroke: #5b8a5b; stroke-width: 1.200; }
.cursor { fill: #fff; stroke: #111; stroke-width: 1; }

.root { position: absolute; left: 485px; top: 365px; width: 201px; height: 38px; background: #eaebf3; border-radius: 2px; font-size: 16.200px; line-height: 36px; text-align: center; color: #333; }
.lb, .tx { position: absolute; white-space: nowrap; font-size: 13.500px; line-height: 18.300px; color: #3a3a3a; margin-top: -2.500px; }
.l1 { left: 722px; top: 239px; }
.l2 { left: 876px; top: 121px; }
.l3 { left: 876px; top: 233px; }
.l4 { left: 876px; top: 336px; }
.l5 { left: 876px; top: 402px; }
.l6 { left: 722px; top: 494px; }
.l7 { left: 722px; top: 655px; }
.l8 { left: 722px; top: 800px; }
.ta { left: 876px; top: -10px; }
.tb { left: 1029px; top: 75px; }
.tc { left: 1029px; top: 196px; }
.td { left: 1029px; top: 299px; }
.te { left: 890px; top: 433px; }
.tf { left: 890px; top: 518px; }
.tg { left: 890px; top: 585px; }
.th { left: 890px; top: 670px; }
.ti { left: 849px; top: 755px; }

/* scrollbars */
.vscroll { width: 18px; flex: none; display: flex; flex-direction: column; background: #fff; }
.sbtn { height: 18px; flex: none; border: 1px solid #ccc; display: flex; align-items: center; justify-content: center; background: #fff; }
.vtrack { background: #ebebeb; flex: none; }
.vt1 { height: 111px; }
.vthumb { height: 127px; background: #fff; border-left: 1px solid #ccc; flex: none; }
.vt2 { flex: 1; }
.tri-up { border: 4px solid transparent; border-bottom: 4px solid #666; border-top: 0; }
.tri-down { border: 4px solid transparent; border-top: 4px solid #666; border-bottom: 0; }
.tri-left { border: 4px solid transparent; border-right: 4px solid #666; border-left: 0; }
.tri-right { border: 4px solid transparent; border-left: 4px solid #666; border-right: 0; }
.hscroll { height: 17px; width: 1416px; flex: none; display: flex; }
.hbtn { width: 18px; flex: none; display: flex; align-items: center; justify-content: center; background: #fff; border: 1px solid #ddd; }
.htrack { background: #ebebeb; flex: none; }
.ht1 { width: 409px; }
.hthumb { width: 729px; background: #fff; border-top: 1px solid #ccc; flex: none; }
.ht2 { flex: 1; }

/* panel */
.panel { flex: 1; display: flex; flex-direction: column; min-width: 0; }
.panelhead { height: 24px; flex: none; display: flex; align-items: center; justify-content: space-between; padding: 0 7px 0 3px; font-size: 14px; color: #333; }
.pin { width: 12px; height: 12px; }
.panelbody { flex: 1; display: flex; min-height: 0; }
.rail { width: 32px; flex: none; border-right: 1px solid #ddd; padding-top: 15px; display: flex; flex-direction: column; }
.rb { height: 31px; width: 31px; margin-bottom: 18.300px; display: flex; align-items: center; justify-content: center; color: #333; }
.rb .i { stroke-width: 2; }
.rb-on { background: #d9d9d9; }
.pcontent { flex: 1; padding-left: 6px; position: relative; }
.prow { display: flex; height: 32px; margin-top: 7px; margin-left: -2px; }
.prow.first { margin-top: 17px; }
.pc { width: 59.500px; flex: none; display: flex; align-items: center; padding-left: 18px; color: #444; }
.pc-off { color: #aaa; }
.pc .i { stroke-width: 1.800; }
.pcaret { margin-left: 6px; width: 0; height: 0; border: 3px solid transparent; border-top: 3px solid #999; border-bottom: 0; }
.aa { width: 24px; font-family: "Liberation Sans", sans-serif; font-size: 21px; line-height: 24px; color: #444; text-align: center; }
.plabel { height: 18px; margin-top: 38px; font-size: 13px; line-height: 16px; font-weight: 700; color: #333; }
.plabel.mt36 { margin-top: 36px; }
.plabel.mt38 { margin-top: 38px; }
.pgroup { display: flex; margin-top: 7px; margin-left: 11px; height: 34px; border-left: 1px solid #eee; }
.rainbow { width: 220px; border: 1px solid #eee; border-top: 0; height: 35px; }
.effect { width: 110px; }
.gc { width: 54.500px; display: flex; align-items: center; justify-content: center; flex: none; color: #444; }
.gc-on { background: #d9d9d9; }
.gc .i { width: 20px; height: 20px; }
.effect .i { stroke-width: 1.500; }
.timer { position: absolute; left: 162px; top: 794px; width: 30px; height: 30px; border-radius: 50%; background: linear-gradient(170deg, #3d95f5 55%, #7fc2fb); color: #e8f3ff; font-size: 9.500px; line-height: 30px; text-align: center; box-shadow: 0 0 3px #bcd; font-family: "Liberation Sans", sans-serif; }

/* status bar */
.status { height: 27px; flex: none; border-top: 1px solid #ddd; display: flex; align-items: center; background: #fff; padding-left: 4px; }
.url { font-size: 13.700px; color: #1a3e96; text-decoration: underline; font-family: "Liberation Sans", sans-serif; }
.sright { margin-left: auto; padding-right: 12px; display: flex; align-items: center; color: #444; }
.st { width: 19px; height: 19px; stroke-width: 1.300; }
.zm { font-size: 16px; color: #777; width: 12px; text-align: center; }
.zp { margin-left: 2px; }
.slider { width: 92px; height: 2px; background: #999; margin-left: 6px; position: relative; }
.knob { position: absolute; left: 20px; top: -6px; width: 5px; height: 14px; border: 1px solid #888; border-right: 0; background: #fff; }
.pct { font-size: 13px; color: #555; margin-left: 5px; }
.scaret { margin-left: 2px; border: 2.500px solid transparent; border-top: 3px solid #888; border-bottom: 0; }

/* taskbar */
.taskbar { height: 49px; flex: none; background: #cde2ec; border-top: 2px solid #aebcc3; display: flex; align-items: center; }
.weather { width: 561px; flex: none; position: relative; display: flex; align-items: center; padding-left: 22px; }
.wicon { width: 20px; height: 26px; flex: none; }
.wbadge { position: absolute; left: 31px; top: -9px; width: 15px; height: 15px; border-radius: 50%; background: #d33a22; color: #fff; font-size: 10px; line-height: 15px; text-align: center; }
.wtext { margin: -4px 0 0 10px; font-size: 11.500px; line-height: 16px; color: #222; white-space: nowrap; }
.wsub { color: #666; }
.win { width: 24px; height: 24px; flex: none; }
.search { width: 219px; height: 32px; margin-left: 14px; flex: none; border-radius: 16px; background: #e6f1f5; border: 1px solid #d8e6ec; display: flex; align-items: center; padding-left: 9px; font-size: 14px; color: #444; position: relative; }
.stext { line-height: 20px; margin: -4px 0 0 2px; }
.sq { width: 16px; height: 16px; fill: none; stroke: #222; stroke-width: 2; margin-right: 8px; }
.berg { position: absolute; right: 2px; top: -1px; width: 48px; height: 32px; }
.apps-row { display: flex; margin-left: 5px; flex: none; }
.ta-c { width: 44.400px; height: 40px; display: flex; align-items: center; justify-content: center; position: relative; }
.ta { width: 24px; height: 24px; }
.ta-dot::after { content: ""; position: absolute; bottom: 0; width: 5px; height: 5px; border-radius: 50%; background: #7f8c94; }
.ta-cur { background: #e2eef3; border-radius: 4px; }
.ta-cur::after { content: ""; position: absolute; bottom: 0; width: 16px; height: 3px; border-radius: 2px; background: #1a70c8; }
.tam { width: 26px; height: 26px; }
.tray { margin-left: auto; padding-right: 17px; display: flex; align-items: center; color: #222; }
.tr { width: 20px; height: 20px; fill: none; stroke: currentColor; stroke-width: 1.500; margin: 0 6px; flex: none; }
.tr.blue { color: #1d5fc0; }
.zh { width: 33px; margin-right: 5px; text-align: center; font-size: 16px; line-height: 20px; color: #222; margin-top: -3px; }
.tr.tr24 { margin: 0 2px; }
.clock { margin-left: 6px; width: 63px; text-align: right; font-size: 12px; line-height: 16px; color: #222; margin-top: -2px; }
.bell { width: 22px; height: 22px; margin-left: 5px; flex: none; }
```
